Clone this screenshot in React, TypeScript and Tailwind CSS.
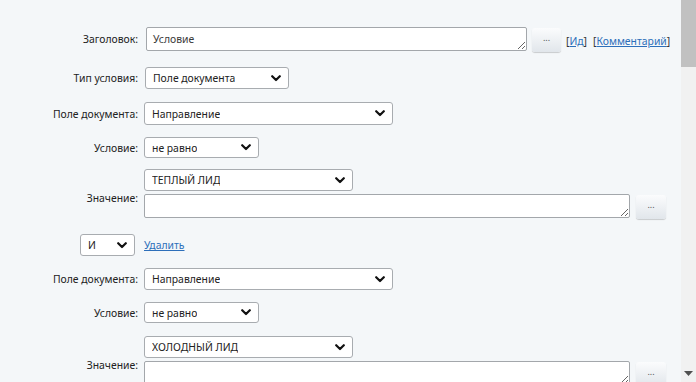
import React from 'react';

const Chevron: React.FC = () => (
  <svg width="10" height="7" viewBox="0 0 10 7" className="shrink-0">
    <path d="M1.2 1.2 L5 5 L8.8 1.2" fill="none" stroke="#111" strokeWidth="2.2" strokeLinecap="round" strokeLinejoin="round" />
  </svg>
);

interface SelectProps {
  value: string;
  className: string;
}

const FakeSelect: React.FC<SelectProps> = ({ value, className }) => (
  <div className={`flex items-center justify-between rounded-[3px] border border-[#a8acb0] bg-white pl-[7px] pr-[7px] text-[#222] ${className}`}>
    <span className="truncate">{value}</span>
    <Chevron />
  </div>
);

const DotsButton: React.FC<{ className: string }> = ({ className }) => (
  <button className={`flex items-center justify-center rounded-[3px] bg-gradient-to-b from-[#fbfcfd] to-[#e1e6eb] pb-[5px] text-[9px] leading-none text-[#555] shadow-[0_1px_1px_rgba(0,0,0,0.18)] ${className}`}>
    ...
  </button>
);

const Label: React.FC<{ text: string; className?: string }> = ({ text, className = '' }) => (
  <div className={`w-[138px] shrink-0 text-right text-[#222] ${className}`}>{text}</div>
);

const ValueRow: React.FC<{ value: string; className: string }> = ({ value, className }) => (
  <div className={`flex items-center ${className}`}>
    <Label text="Значение:" className="pt-[8px]" />
    <div className="ml-[6px] flex flex-col">
      <FakeSelect value={value} className="h-[22px] w-[209px]" />
      <div className="mt-[3px] flex items-start">
        <textarea
          className="h-[24px] w-[486px] resize-y rounded-[2px] border border-[#a3a7ab] bg-white px-[6px] py-[2px] leading-[18px] outline-none"
          defaultValue=""
        />
        <DotsButton className="ml-[6px] mt-[1px] h-[24px] w-[30px]" />
      </div>
    </div>
  </div>
);

export default function App() {
  return (
    <div
      className="flex h-[382px] w-[696px] overflow-hidden bg-[#f4f7f9] text-[10.4px] leading-[14px]"
      style={{ fontFamily: '"Noto Sans", "Open Sans", sans-serif' }}
    >
      <div className="flex-1 pt-[26px]">
        {/* Заголовок */}
        <div className="flex h-[26px] items-start">
          <Label text="Заголовок:" className="self-center" />
          <textarea
            className="ml-[8px] mt-[1px] h-[24px] w-[381px] resize-y rounded-[2px] border border-[#a3a7ab] bg-white px-[6px] py-[2px] leading-[18px] text-[#3a3a3a] outline-none"
            defaultValue="Условие"
          />
          <DotsButton className="ml-[5px] mt-[2px] h-[24px] w-[29px]" />
          <div className="ml-[5px] self-center pt-[3px] text-[#333]">
            [<a className="text-[#2d6fba] underline">Ид</a>]
            <span className="ml-[6px]">
              [<a className="text-[#2d6fba] underline">Комментарий</a>]
            </span>
          </div>
        </div>

        {/* Тип условия */}
        <div className="mt-[15px] flex items-center">
          <Label text="Тип условия:" />
          <FakeSelect value="Поле документа" className="ml-[7px] h-[22px] w-[144px]" />
        </div>

        <div className="mt-[13px] flex items-center">
          <Label text="Поле документа:" />
          <FakeSelect value="Направление" className="ml-[6px] h-[23px] w-[249px]" />
        </div>

        <div className="mt-[12px] flex items-center">
          <Label text="Условие:" />
          <FakeSelect value="не равно" className="ml-[6px] h-[21px] w-[115px]" />
        </div>

        <ValueRow value="ТЕПЛЫЙ ЛИД" className="mt-[11px]" />

        {/* И / Удалить */}
        <div className="mt-[15px] flex items-center">
          <FakeSelect value="И" className="ml-[80px] h-[22px] w-[55px]" />
          <a className="ml-[9px] text-[#2d6fba] underline">Удалить</a>
        </div>

        <div className="mt-[12px] flex items-center">
          <Label text="Поле документа:" />
          <FakeSelect value="Направление" className="ml-[6px] h-[22px] w-[249px]" />
        </div>

        <div className="mt-[12px] flex items-center">
          <Label text="Условие:" />
          <FakeSelect value="не равно" className="ml-[6px] h-[21px] w-[115px]" />
        </div>

        <ValueRow value="ХОЛОДНЫЙ ЛИД" className="mt-[13px]" />
      </div>

      {/* scrollbar */}
      <div className="flex w-[15px] shrink-0 flex-col bg-[#f1f1f1]">
        <div className="h-[67px] bg-[#c1c1c1]" />
        <div className="flex-1" />
        <div className="flex h-[18px] items-center justify-center">
          <svg width="9" height="5" viewBox="0 0 9 5">
            <path d="M0 0 L9 0 L4.5 5 Z" fill="#505050" />
          </svg>
        </div>
      </div>
    </div>
  );
}
